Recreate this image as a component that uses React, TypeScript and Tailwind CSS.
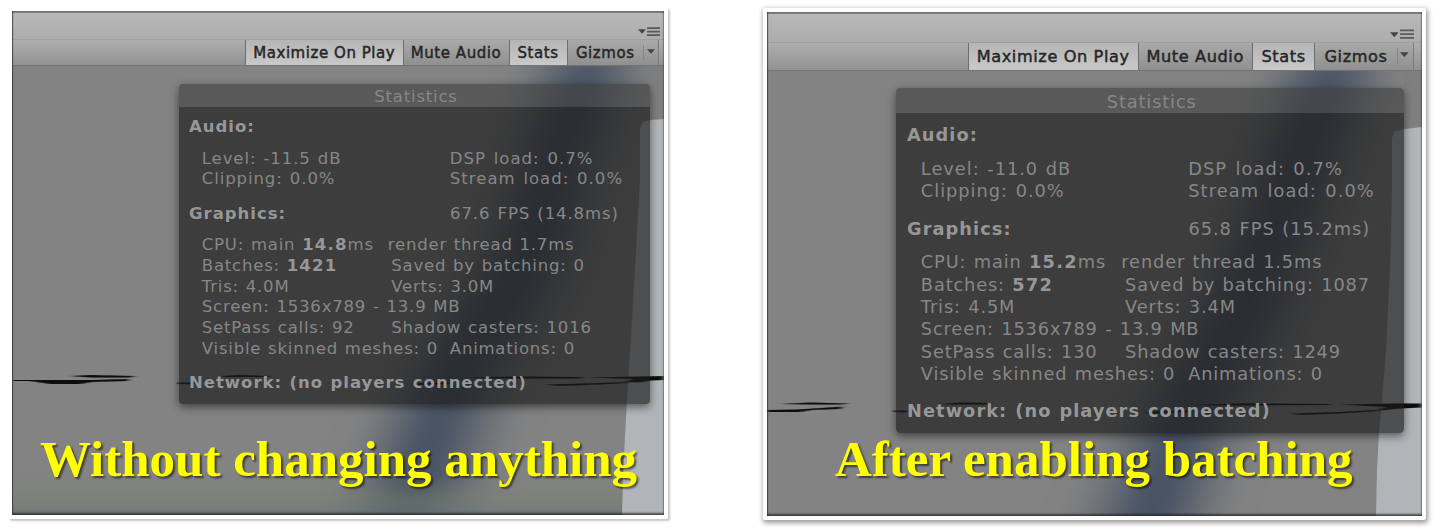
import type { ReactNode } from 'react';

type Scene = {
  id: string;
  viewBox: string;
  band: string;
  core: string;
  wall: string;
  sky: string;
  cracks: string[];
  tint: boolean;
};

type Stats = {
  level: string;
  dsp: string;
  fps: string;
  cpu: string;
  render: string;
  batches: string;
  saved: string;
  tris: string;
  verts: string;
  setPass: string;
  casters: string;
};

type View = {
  card: string;
  frame: string;
  edge: string;
  menuEdge: string;
  overlay: string;
  caption: string;
  captionBox: string;
  scene: Scene;
  stats: Stats;
};

const views: View[] = [
  {
    card: 'ml-[8px] mt-[7px] w-[660px] h-[512px] pl-[4px] pt-[4px] shadow-[2px_2px_2px_rgba(0,0,0,0.22)]',
    frame: 'w-[652px] h-[504px] text-[10px]',
    edge: 'pr-[5px]',
    menuEdge: 'pr-[4px]',
    overlay: 'mr-[14px] mt-[18px]',
    caption: 'Without changing anything',
    captionBox: 'left-[28px] top-[423px]',
    scene: {
      id: 'a',
      viewBox: '12 11 652 504',
      band: '535,50 645,50 610,160 585,260 550,330 510,400 490,460 460,560 330,560 370,440 410,360 455,300 490,220 510,140',
      core: '570,50 622,50 580,160 555,260 515,330 480,380 460,440 425,560 360,560 405,430 430,370 465,310 505,250 530,160',
      wall: '640,128 643,122 651,120 664,119 664,515 622,515 623,480 625,436 627,400 632,320 636,250 640,180',
      sky: '650,66 664,66 664,119 650,120',
      cracks: [
        'M12 380 L50 380 L92 380 L128 379 L128 381 L92 382 L80 384 L50 384 L30 381 L12 381Z',
        'M70 376 L90 375 L135 376 L130 377.5 L90 377.5Z',
        'M178 382.5 L195 382.5 L195 384.5 L178 384Z',
        'M220 376 L240 375 L270 376 L268 377 L225 377Z',
        'M415 383.5 L450 382 L450 384 L418 385Z',
        'M465 377.5 L520 376.5 L582 377 L582 378.5 L500 378.5Z',
        'M545 384.5 L600 383 L628 382 L628 383 L600 384.5 L560 386Z',
        'M590 377.5 L640 376.5 L664 376 L664 380 L650 380.5 L640 382.5 L625 382 L632 379Z',
      ],
      tint: true,
    },
    stats: {
      level: '-11.5 dB', dsp: '0.7%', fps: '67.6 FPS (14.8ms)', cpu: '14.8', render: '1.7ms',
      batches: '1421', saved: '0', tris: '4.0M', verts: '3.0M', setPass: '92', casters: '1016',
    },
  },
  {
    card: 'ml-[95px] mt-[8px] w-[663px] h-[512px] pl-[4px] pt-[4px] shadow-[1px_2px_5px_1px_rgba(0,0,0,0.4)]',
    frame: 'w-[655px] h-[504px] text-[10.78px]',
    edge: 'pr-[8px]',
    menuEdge: 'pr-[8px]',
    overlay: 'mr-[18px] mt-[17px]',
    caption: 'After enabling batching',
    captionBox: 'left-[68px] top-[422px]',
    scene: {
      id: 'b',
      viewBox: '767 12 655 504',
      band: '1280,50 1392,50 1355,160 1322,260 1290,340 1250,420 1225,480 1200,570 1060,570 1100,470 1145,380 1190,310 1230,220 1252,140',
      core: '1315,50 1368,50 1325,160 1290,260 1258,340 1220,400 1195,470 1165,570 1100,570 1140,460 1168,390 1208,320 1240,250 1272,160',
      wall: '1392,138 1395,131 1404,129 1422,127 1422,516 1376,516 1377,470 1379,433 1382,400 1386,350 1390,270 1392,190',
      sky: '1404,70 1422,70 1422,127 1404,129',
      cracks: [
        'M767 410 L798 409.5 L843 406.5 L840 409 L812 410 L800 412 L767 412Z',
        'M780 404 L810 402.5 L849 403.5 L842 404.5 L810 404.5Z',
        'M893 410.5 L907 410.5 L907 412.5 L895 412Z',
        'M940 404 L960 402.5 L992 403 L988 404.5 L950 404.5Z',
        'M1145 412 L1190 410 L1190 412 L1150 413.5Z',
        'M1190 405 L1240 403.5 L1330 404 L1330 405 L1230 405.5Z',
        'M1290 413.5 L1340 412 L1375 410 L1378 411 L1340 413.5 L1300 415Z',
        'M1340 404.5 L1395 403.5 L1422 403.5 L1422 407.5 L1400 408.5 L1375 411 L1385 407Z',
      ],
      tint: false,
    },
    stats: {
      level: '-11.0 dB', dsp: '0.7%', fps: '65.8 FPS (15.2ms)', cpu: '15.2', render: '1.5ms',
      batches: '572', saved: '1087', tris: '4.5M', verts: '3.4M', setPass: '130', casters: '1249',
    },
  },
];

function Backdrop({ scene }: { scene: Scene }) {
  const [x, y, w, h] = scene.viewBox.split(' ').map(Number);
  return (
    <svg className="absolute inset-0 size-full" viewBox={scene.viewBox} preserveAspectRatio="none">
      <defs>
        <filter id={`wide-${scene.id}`} x="-50%" y="-20%" width="200%" height="140%" colorInterpolationFilters="sRGB">
          <feGaussianBlur stdDeviation="19" />
        </filter>
        <filter id={`soft-${scene.id}`}>
          <feGaussianBlur stdDeviation="0.7" />
        </filter>
        <filter id={`streak-${scene.id}`} x="-10%" y="-50%" width="120%" height="200%">
          <feGaussianBlur stdDeviation="2.5 0.5" />
        </filter>
        <linearGradient id={`tint-${scene.id}`} x1="0" y1="0" x2="0" y2="1">
          <stop offset="0" stopColor="#77806f" stopOpacity="0" />
          <stop offset="0.6" stopColor="#77806f" stopOpacity="0.5" />
          <stop offset="0.85" stopColor="#6f7877" stopOpacity="0.6" />
          <stop offset="1" stopColor="#68727a" stopOpacity="0.8" />
        </linearGradient>
      </defs>
      <rect x={x} y={y} width={w} height={h} fill="#838383" />
      <polygon points={scene.band} fill="#656b73" opacity="0.75" filter={`url(#wide-${scene.id})`} />
      <polygon points={scene.core} fill="#3e4a5e" opacity="0.85" filter={`url(#wide-${scene.id})`} />
      {scene.tint && <rect x={x} y="475" width={w} height="40" fill={`url(#tint-${scene.id})`} />}
      <polygon points={scene.sky} fill="#7d7d7e" opacity="0.7" />
      <polygon points={scene.wall} fill="#b0b5b8" filter={`url(#soft-${scene.id})`} />
      {scene.cracks.map((d) => (
        <path key={d} d={d} fill="#0b0b0b" filter={`url(#streak-${scene.id})`} />
      ))}
    </svg>
  );
}

type Spacing = 'normal' | 'medium' | 'wide';

const spacings: Record<Spacing, string> = {
  normal: 'tracking-[0.048em] [word-spacing:0.05em]',
  medium: 'tracking-[0.055em] [word-spacing:0.06em]',
  wide: 'tracking-[0.062em] [word-spacing:0.09em]',
};

function Text({ spacing = 'normal', children }: { spacing?: Spacing; children: ReactNode }) {
  return <span className={`${spacings[spacing]} text-[1.65em] whitespace-pre`}>{children}</span>;
}

function Heading({ children }: { children: ReactNode }) {
  return (
    <span className="text-[1.65em] font-bold tracking-[0.06em] whitespace-pre text-[#979797] [word-spacing:0.04em]">
      {children}
    </span>
  );
}

function Row({ split, wide, left, right }: { split: string; wide?: boolean; left: ReactNode; right?: ReactNode }) {
  return (
    <div className="flex h-[2.075em] items-center pl-[2.28em]">
      <div className={`${split} flex shrink-0 items-center`}>
        <Text spacing={wide ? 'medium' : 'normal'}>{left}</Text>
      </div>
      {right && <Text spacing={wide ? 'wide' : 'normal'}>{right}</Text>}
    </div>
  );
}

function Caret() {
  return (
    <svg className="h-[0.5em] w-[0.8em]" viewBox="0 0 8 5">
      <path d="M0 0.3H8L4 4.8Z" fill="#444444" />
    </svg>
  );
}

function ToolButton({ width, active, children }: { width: string; active?: boolean; children: ReactNode }) {
  return (
    <div
      className={`${width} ${active ? 'from-[#b5b5b5] to-[#c9c9c9]' : 'from-[#a9a9a9] to-[#909090]'} flex items-center justify-center border-l-[1.5px] border-[#6d6d6d] bg-linear-to-b pt-[0.15em]`}
    >
      <span className="text-[1.5em] tracking-[0.037em] whitespace-pre text-[#262626] [-webkit-text-stroke:0.45px_#262626]">
        {children}
      </span>
    </div>
  );
}

function StatisticsPanel({ stats, place }: { stats: Stats; place: string }) {
  return (
    <section
      className={`${place} flex h-[32em] w-[47.1em] flex-col self-end overflow-hidden rounded-[0.4em] text-[#878787] shadow-[0_3px_9px_rgba(0,0,0,0.5)]`}
    >
      <header className="flex h-[2.25em] shrink-0 items-center justify-center bg-[rgba(62,62,62,0.6)] pt-[0.35em] pl-[0.3em]">
        <Text>Statistics</Text>
      </header>
      <div className="flex flex-1 flex-col bg-[rgba(27,27,27,0.67)] pt-[1em]">
        <div className="flex h-[2.08em] items-center pl-[1em]">
          <Heading>Audio:</Heading>
        </div>
        <div className="mt-[1.12em]">
          <Row wide split="w-[24.8em]" left={`Level: ${stats.level}`} right={`DSP load: ${stats.dsp}`} />
          <Row wide split="w-[24.8em]" left="Clipping: 0.0%" right="Stream load: 0.0%" />
        </div>
        <div className="mt-[1.38em] flex h-[2.08em] items-center pl-[1em]">
          <div className="flex w-[26.1em] shrink-0 items-center">
            <Heading>Graphics:</Heading>
          </div>
          <Text spacing="medium">{stats.fps}</Text>
        </div>
        <div className="mt-[1.05em]">
          <Row
            split="w-[18.6em]"
            left={
              <>
                CPU: main <b className="tracking-[0.07em] text-[#979797]">{stats.cpu}</b>ms
              </>
            }
            right={`render thread ${stats.render}`}
          />
          <Row
            split="w-[18.95em]"
            left={
              <>
                Batches: <b className="tracking-[0.07em] text-[#979797]">{stats.batches}</b>
              </>
            }
            right={`Saved by batching: ${stats.saved}`}
          />
          <Row split="w-[18.95em]" left={`Tris: ${stats.tris}`} right={`Verts: ${stats.verts}`} />
          <Row split="w-[18.95em]" left="Screen: 1536x789 - 13.9 MB" />
          <Row split="w-[18.95em]" left={`SetPass calls: ${stats.setPass}`} right={`Shadow casters: ${stats.casters}`} />
          <Row split="w-[24.8em]" left="Visible skinned meshes: 0" right="Animations: 0" />
        </div>
        <div className="mt-[1.35em] flex h-[2.08em] items-center pl-[1em]">
          <Heading>Network: (no players connected)</Heading>
        </div>
      </div>
    </section>
  );
}

function GameView({ view }: { view: View }) {
  return (
    <article className={`${view.card} shrink-0 rounded-[2px] bg-white`}>
      <div className={`${view.frame} relative overflow-hidden leading-none`}>
        <Backdrop scene={view.scene} />
        <div className="relative flex h-full flex-col">
          <div
            className={`${view.menuEdge} flex h-[2.75em] shrink-0 items-end justify-end gap-[0.15em] border-t-[2px] border-[#7c7c7c] bg-linear-to-b from-[#b8b8b8] to-[#adadad] pb-[0.22em]`}
          >
            <div className="flex pb-[0.2em]">
              <Caret />
            </div>
            <svg className="h-[0.95em] w-[1.3em]" viewBox="0 0 13 9.5">
              <path d="M0 1.2H13M0 4.7H13M0 8.2H13" stroke="#5a5a5a" strokeWidth="1.7" />
            </svg>
          </div>
          <div
            className={`${view.edge} flex h-[2.75em] shrink-0 justify-end border-t border-b-[1.5px] border-t-[#9f9f9f] border-b-[#737373] bg-linear-to-b from-[#aeaeae] to-[#929292]`}
          >
            <ToolButton width="w-[15.75em]" active>Maximize On Play</ToolButton>
            <ToolButton width="w-[10.6em]">Mute Audio</ToolButton>
            <ToolButton width="w-[5.8em]" active>Stats</ToolButton>
            <ToolButton width="w-[7.65em]">Gizmos</ToolButton>
            <div className="flex w-[1.6em] border-r-[1.5px] border-[#7a7a7a] bg-linear-to-b from-[#a9a9a9] to-[#909090] py-[0.5em]">
              <div className="flex border-l border-[#858585] pt-[0.4em] pl-[0.25em]">
                <Caret />
              </div>
            </div>
          </div>
          <StatisticsPanel stats={view.stats} place={view.overlay} />
        </div>
        <h2
          className={`${view.captionBox} absolute font-['Liberation_Serif',serif] text-[51px] leading-[50px] font-bold whitespace-nowrap text-[#ffff00] [text-shadow:2px_2px_2px_rgba(0,0,0,0.55)]`}
        >
          {view.caption}
        </h2>
        <div className="absolute inset-0 shadow-[inset_1px_0_1px_rgba(50,50,50,0.7),inset_-1px_0_1px_rgba(60,60,60,0.3),inset_0_-2px_2px_rgba(35,35,35,0.7)]" />
      </div>
    </article>
  );
}

export default function App() {
  return (
    <main className="flex h-[531px] w-[1440px] items-start overflow-hidden bg-white font-['DejaVu_Sans',sans-serif]">
      {views.map((view) => (
        <GameView key={view.scene.id} view={view} />
      ))}
    </main>
  );
}
